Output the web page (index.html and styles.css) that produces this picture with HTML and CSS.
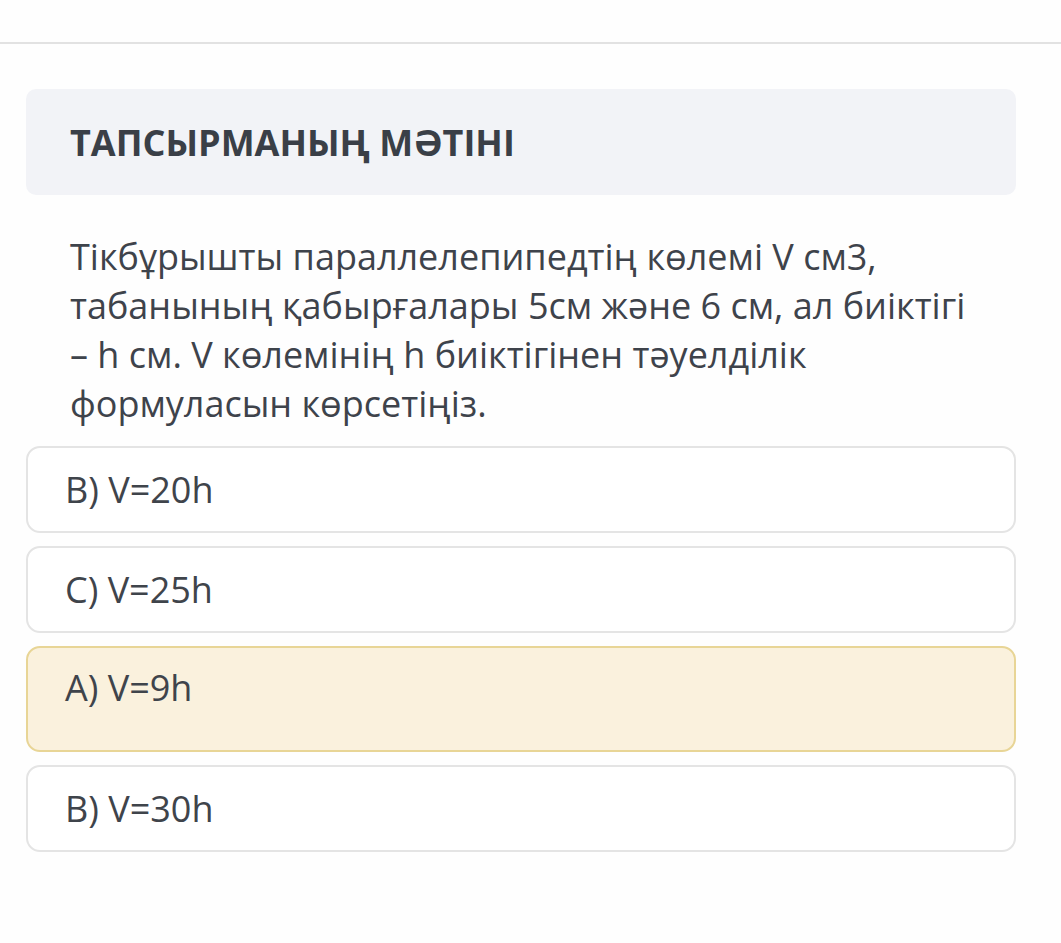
FILE: index.html
```html
<!DOCTYPE html>
<html lang="kk">
<head>
<meta charset="utf-8">
<title>Тапсырма</title>
<link rel="stylesheet" href="styles.css">
</head>
<body>
<div class="topbar"></div>
<main class="content">
  <section class="header">
    <h1 class="title">ТАПСЫРМАНЫҢ МӘТІНІ</h1>
  </section>
  <p class="question">Тікбұрышты параллелепипедтің көлемі V см3, табанының қабырғалары 5см және 6 см, ал биіктігі – h см. V көлемінің h биіктігінен тәуелділік формуласын көрсетіңіз.</p>
  <ul class="options">
    <li class="option">B) V=20h</li>
    <li class="option">C) V=25h</li>
    <li class="option option-selected">A) V=9h</li>
    <li class="option">B) V=30h</li>
  </ul>
</main>
</body>
</html>
```

FILE: styles.css
```css
html, body {
  margin: 0;
  padding: 0;
  background: #fefefe;
  font-family: "Open Sans", "Noto Sans", sans-serif;
  color: #3e434b;
}

.topbar {
  height: 42px;
  border-bottom: 2px solid #e2e2e2;
}

.content {
  padding: 45px 45px 0 26px;
}

.header {
  background: #f2f3f7;
  border-radius: 10px;
  height: 106px;
  display: flex;
  align-items: center;
  padding-left: 44px;
}

.title {
  margin: 0;
  font-size: 36px;
  font-weight: 700;
  color: #3a3f47;
}

.question {
  margin: 37px 0 0 0;
  padding: 0 44px;
  font-size: 36px;
  line-height: 49px;
  color: #3e434b;
}

.options {
  list-style: none;
  margin: 18px 0 0 0;
  padding: 0;
  display: flex;
  flex-direction: column;
  gap: 13px;
}

.option {
  border: 2px solid #e4e4e4;
  border-radius: 14px;
  background: #fff;
  padding: 17px 37px;
  font-size: 36px;
  line-height: 49px;
  color: #3f444b;
}

.option-selected {
  background: #faf1dd;
  border-color: #e8d596;
  padding-top: 15px;
  padding-bottom: 38px;
}
```
